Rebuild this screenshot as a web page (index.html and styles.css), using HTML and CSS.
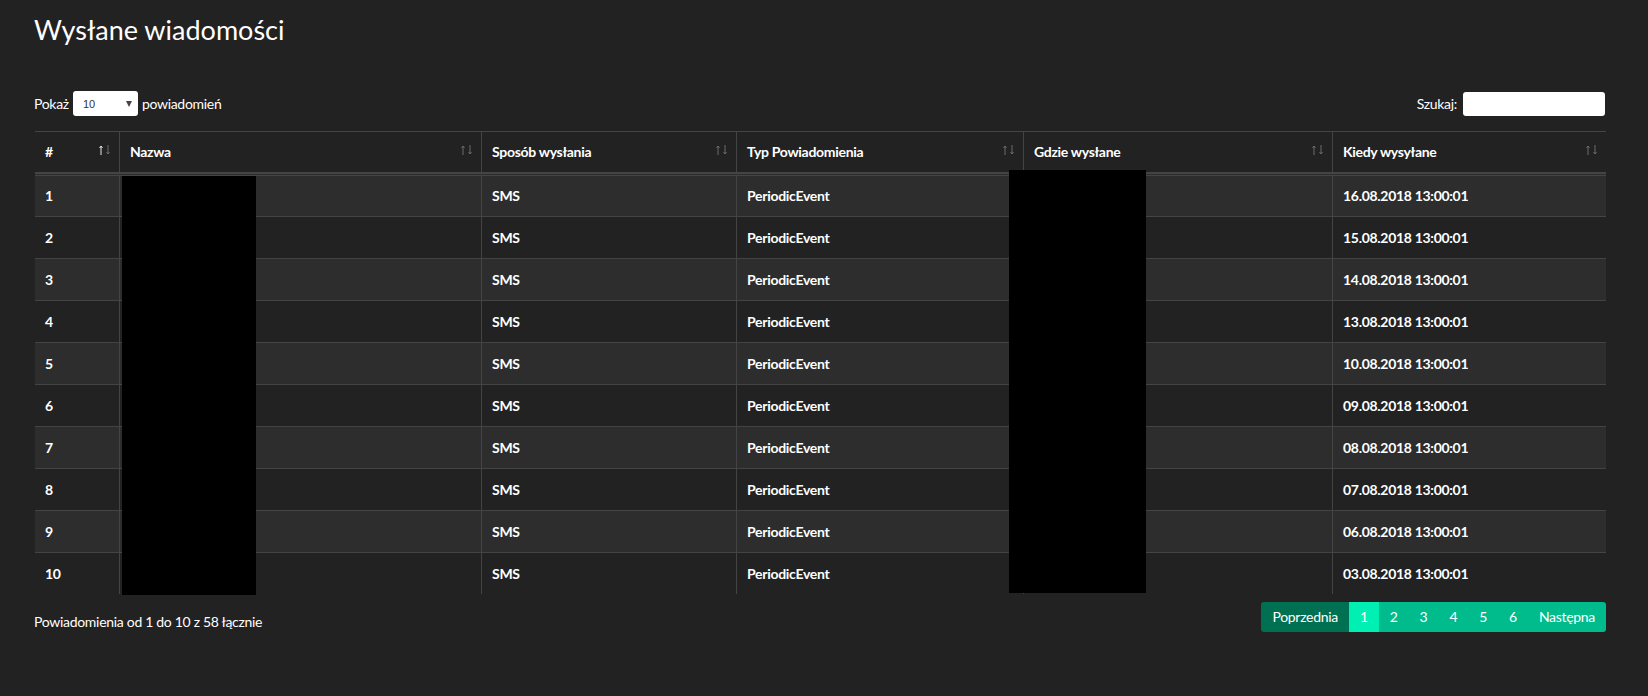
FILE: index.html
```html
<!DOCTYPE html>
<html lang="pl">
<head>
<meta charset="utf-8">
<title>Wysłane wiadomości</title>
<link rel="stylesheet" href="styles.css">
</head>
<body>
<div class="page">
  <h3 class="title">Wysłane wiadomości</h3>

  <div class="controls">
    <div class="length">
      <span>Pokaż</span>
      <span class="select-wrap">
        <select class="select"><option>10</option><option>25</option><option>50</option><option>100</option></select>
        <span class="caret"></span>
      </span>
      <span>powiadomień</span>
    </div>
    <div class="search">
      <span>Szukaj:</span>
      <input class="search-input" type="search">
    </div>
  </div>

  <div class="table-wrap">
    <table class="data">
      <thead>
        <tr>
          <th class="c-num"><div class="th-in"><span>#</span><svg class="sort asc" viewBox="0 0 12 10" width="12" height="10"><path class="up" d="M2 10V1M0.5 3L2 1L3.5 3"/><path class="down" d="M9 0V9M7.5 7L9 9L10.5 7"/></svg></div></th>
          <th class="c-name"><div class="th-in"><span>Nazwa</span><svg class="sort" viewBox="0 0 12 10" width="12" height="10"><path class="up" d="M2 10V1M0.5 3L2 1L3.5 3"/><path class="down" d="M9 0V9M7.5 7L9 9L10.5 7"/></svg></div></th>
          <th class="c-how"><div class="th-in"><span>Sposób wysłania</span><svg class="sort" viewBox="0 0 12 10" width="12" height="10"><path class="up" d="M2 10V1M0.5 3L2 1L3.5 3"/><path class="down" d="M9 0V9M7.5 7L9 9L10.5 7"/></svg></div></th>
          <th class="c-type"><div class="th-in"><span>Typ Powiadomienia</span><svg class="sort" viewBox="0 0 12 10" width="12" height="10"><path class="up" d="M2 10V1M0.5 3L2 1L3.5 3"/><path class="down" d="M9 0V9M7.5 7L9 9L10.5 7"/></svg></div></th>
          <th class="c-where"><div class="th-in"><span>Gdzie wysłane</span><svg class="sort" viewBox="0 0 12 10" width="12" height="10"><path class="up" d="M2 10V1M0.5 3L2 1L3.5 3"/><path class="down" d="M9 0V9M7.5 7L9 9L10.5 7"/></svg></div></th>
          <th class="c-when"><div class="th-in"><span>Kiedy wysyłane</span><svg class="sort" viewBox="0 0 12 10" width="12" height="10"><path class="up" d="M2 10V1M0.5 3L2 1L3.5 3"/><path class="down" d="M9 0V9M7.5 7L9 9L10.5 7"/></svg></div></th>
        </tr>
      </thead>
      <tbody>
        <tr><td>1</td><td></td><td>SMS</td><td>PeriodicEvent</td><td></td><td>16.08.2018 13:00:01</td></tr>
        <tr><td>2</td><td></td><td>SMS</td><td>PeriodicEvent</td><td></td><td>15.08.2018 13:00:01</td></tr>
        <tr><td>3</td><td></td><td>SMS</td><td>PeriodicEvent</td><td></td><td>14.08.2018 13:00:01</td></tr>
        <tr><td>4</td><td></td><td>SMS</td><td>PeriodicEvent</td><td></td><td>13.08.2018 13:00:01</td></tr>
        <tr><td>5</td><td></td><td>SMS</td><td>PeriodicEvent</td><td></td><td>10.08.2018 13:00:01</td></tr>
        <tr><td>6</td><td></td><td>SMS</td><td>PeriodicEvent</td><td></td><td>09.08.2018 13:00:01</td></tr>
        <tr><td>7</td><td></td><td>SMS</td><td>PeriodicEvent</td><td></td><td>08.08.2018 13:00:01</td></tr>
        <tr><td>8</td><td></td><td>SMS</td><td>PeriodicEvent</td><td></td><td>07.08.2018 13:00:01</td></tr>
        <tr><td>9</td><td></td><td>SMS</td><td>PeriodicEvent</td><td></td><td>06.08.2018 13:00:01</td></tr>
        <tr><td>10</td><td></td><td>SMS</td><td>PeriodicEvent</td><td></td><td>03.08.2018 13:00:01</td></tr>
      </tbody>
    </table>
    <div class="redact redact-name"></div>
    <div class="redact redact-where"></div>
  </div>

  <div class="footer">
    <div class="info">Powiadomienia od 1 do 10 z 58 łącznie</div>
    <ul class="pagination">
      <li class="page-item disabled"><span class="page-link">Poprzednia</span></li>
      <li class="page-item active"><span class="page-link">1</span></li>
      <li class="page-item"><span class="page-link">2</span></li>
      <li class="page-item"><span class="page-link">3</span></li>
      <li class="page-item"><span class="page-link">4</span></li>
      <li class="page-item"><span class="page-link">5</span></li>
      <li class="page-item"><span class="page-link">6</span></li>
      <li class="page-item"><span class="page-link">Następna</span></li>
    </ul>
  </div>
</div>
</body>
</html>
```
FILE: styles.css
```css
html, body {
  margin: 0;
  padding: 0;
  background: #222222;
}

body {
  font-family: Lato, "Open Sans", "Liberation Sans", sans-serif;
  font-size: 14px;
  letter-spacing: -0.3px;
  color: #ffffff;
}

.page {
  padding: 0 42px 0 35px;
}

.title {
  margin: 13px 0 0 -1px;
  font-size: 27px;
  font-weight: 400;
  letter-spacing: 0;
  line-height: 34px;
}

.controls {
  margin-top: 44px;
  height: 25px;
  display: flex;
  justify-content: space-between;
  align-items: center;
}

.length,
.search {
  display: flex;
  align-items: center;
  line-height: 22px;
}

.length { gap: 4px; margin-left: -1px; }
.search { gap: 6px; margin-right: 1px; }

.select-wrap {
  position: relative;
  display: block;
  width: 65px;
  height: 25px;
}

.select {
  appearance: none;
  -webkit-appearance: none;
  width: 65px;
  height: 25px;
  margin: 0;
  border: 0;
  border-radius: 3px;
  background: #ffffff;
  color: #333333;
  font-family: "Liberation Sans", Arial, sans-serif;
  font-size: 11px;
  letter-spacing: 0;
  padding: 0 0 0 10px;
  outline: none;
}

.caret {
  position: absolute;
  right: 6px;
  top: 10px;
  width: 0;
  height: 0;
  border-left: 3.5px solid transparent;
  border-right: 3.5px solid transparent;
  border-top: 6px solid #444444;
  pointer-events: none;
}

.search-input {
  width: 142px;
  height: 24px;
  box-sizing: border-box;
  margin: 0;
  border: 0;
  border-radius: 3px;
  background: #ffffff;
  padding: 0 6px;
  outline: none;
}

.table-wrap {
  position: relative;
  margin-top: 15px;
  width: 1571px;
}

.data {
  width: 1571px;
  table-layout: fixed;
  border-collapse: separate;
  border-spacing: 0;
  font-weight: 700;
}

.data th,
.data td {
  box-sizing: border-box;
  border-right: 1px solid #444444;
  text-align: left;
  vertical-align: middle;
  white-space: nowrap;
}

.data th:last-child,
.data td:last-child {
  border-right: 0;
}

.data th {
  border-top: 1px solid #444444;
  border-bottom: 2px solid #444444;
  padding: 9px 8px 9px 10px;
  line-height: 22px;
  font-weight: 700;
}

.th-in {
  display: flex;
  justify-content: space-between;
  align-items: center;
}

.sort {
  flex: none;
  display: block;
  margin-bottom: 5px;
  fill: none;
  stroke-width: 1;
}

.sort path { stroke: #6a6a6a; }
.sort.asc .up { stroke: #dfe9ee; }

.c-num { width: 85px; }
.c-name { width: 362px; }
.c-how { width: 255px; }
.c-type { width: 287px; }
.c-where { width: 309px; }
.c-when { width: 273px; }

.data td {
  border-top: 1px solid #444444;
  padding: 9px 10px;
  line-height: 23px;
}

.data tbody tr:nth-child(odd) {
  background: #2d2d2d;
}

.data tbody tr:first-child td {
  border-top-color: #2d2d2d;
  box-shadow: inset 0 1px 0 #444444;
}

.redact {
  position: absolute;
  background: #000000;
}

.redact-name {
  left: 87px;
  top: 45px;
  width: 134px;
  height: 419px;
}

.redact-where {
  left: 974px;
  top: 39px;
  width: 137px;
  height: 423px;
}

.footer {
  margin-top: 6px;
  width: 1571px;
  display: flex;
  justify-content: space-between;
  align-items: flex-start;
}

.info {
  padding-top: 11px;
  line-height: 22px;
  margin-left: -1px;
}

.pagination {
  display: flex;
  list-style: none;
  margin: 2px 0 0 0;
  padding: 0;
}

.page-link {
  display: block;
  padding: 5px 11px;
  line-height: 20px;
  background: #00bc8c;
  color: #ffffff;
}

.page-item:first-child .page-link {
  border-radius: 3px 0 0 3px;
}

.page-item:last-child .page-link {
  border-radius: 0 3px 3px 0;
}

.page-item.disabled .page-link {
  background: #007053;
}

.page-item.active .page-link {
  background: #00efb2;
}
```
